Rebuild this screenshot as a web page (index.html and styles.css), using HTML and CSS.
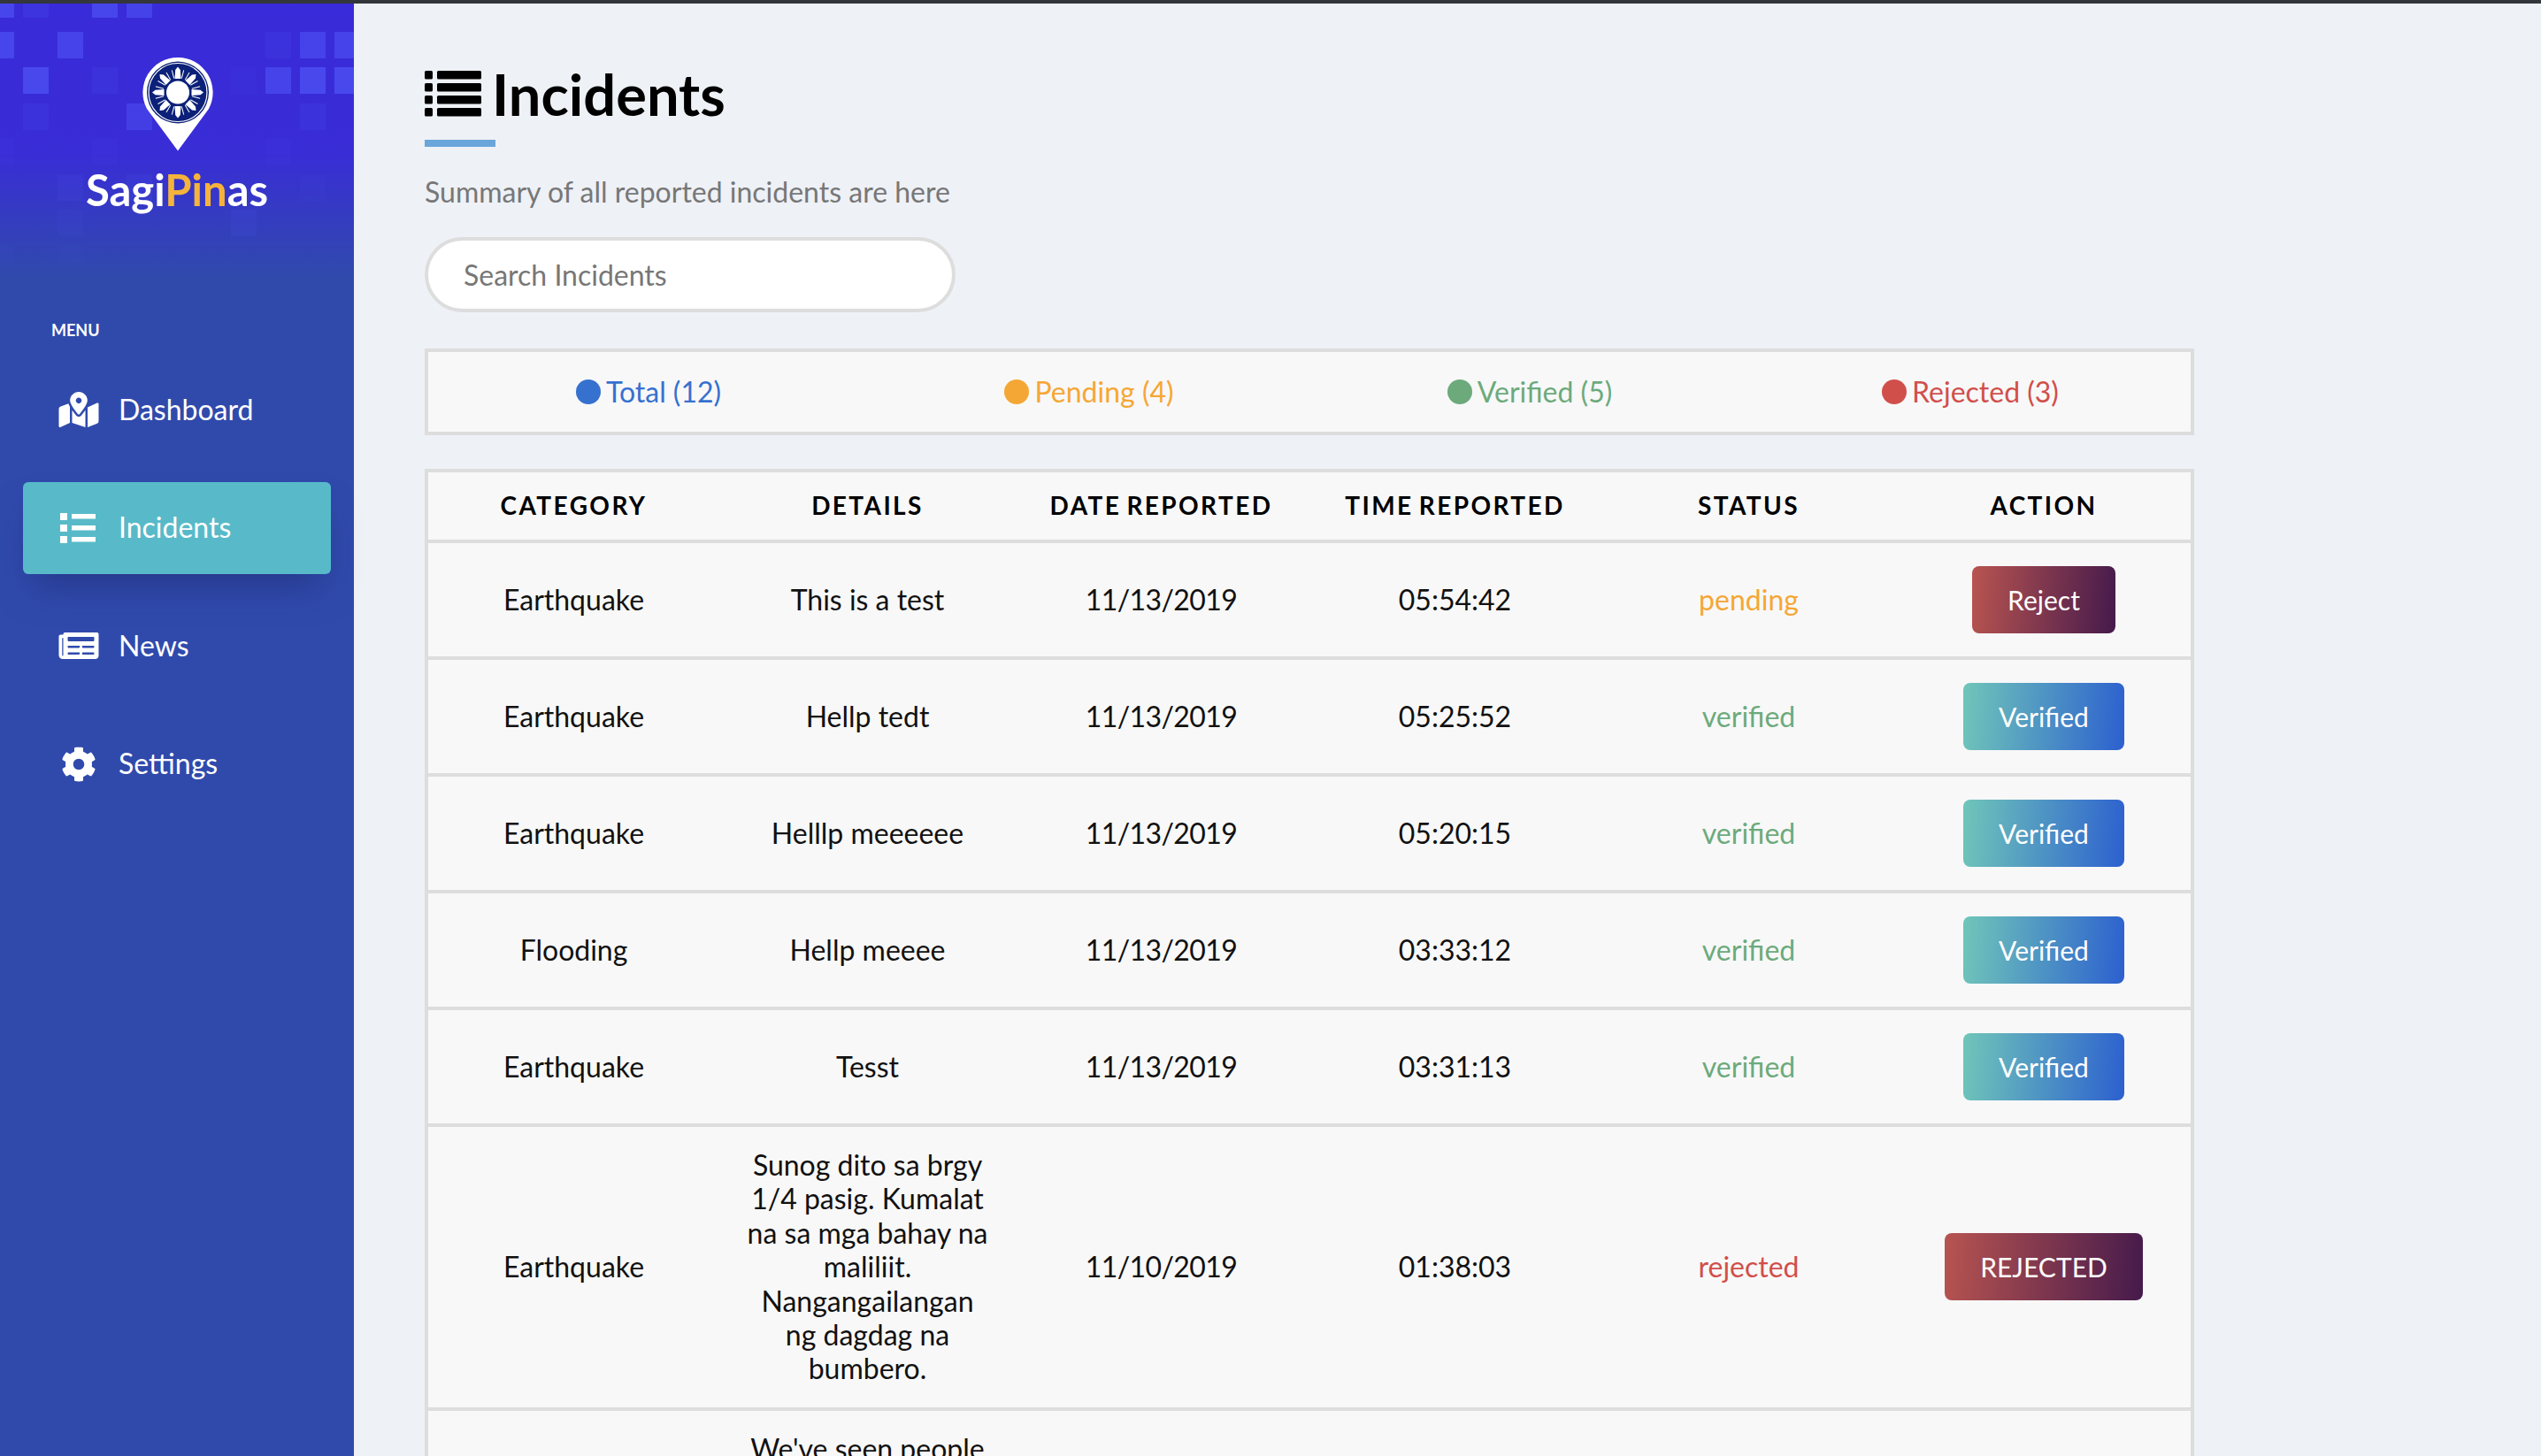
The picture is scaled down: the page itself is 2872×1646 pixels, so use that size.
FILE: index.html
```html
<!DOCTYPE html>
<html lang="en">
<head>
    <meta charset="UTF-8">
    <meta name="viewport" content="width=device-width, initial-scale=1.0">
    <title>SagiPinas - Incidents</title>
    <link rel="stylesheet" href="styles.css">
</head>
<body>
    <div class="top-bar"></div>

    <div class="app">

        <!-- Sidebar -->
        <aside class="sidebar">
            <svg class="sidebar-tiles" viewBox="0 0 400 300" aria-hidden="true">
                <rect x="-13" y="-10" width="29" height="26" opacity=".5"/>
                <rect x="26" y="-10" width="29" height="26" opacity=".18"/>
                <rect x="104" y="-10" width="29" height="26" opacity=".5"/>
                <rect x="143" y="-10" width="29" height="26" opacity=".45"/>
                <rect x="-13" y="32" width="29" height="30" opacity=".5"/>
                <rect x="65" y="32" width="29" height="30" opacity=".45"/>
                <rect x="300" y="32" width="29" height="30" opacity=".12"/>
                <rect x="339" y="32" width="29" height="30" opacity=".45"/>
                <rect x="378" y="32" width="29" height="30" opacity=".45"/>
                <rect x="26" y="72" width="29" height="30" opacity=".55"/>
                <rect x="104" y="72" width="29" height="30" opacity=".12"/>
                <rect x="261" y="72" width="29" height="30" opacity=".05"/>
                <rect x="300" y="72" width="29" height="30" opacity=".45"/>
                <rect x="339" y="72" width="29" height="30" opacity=".55"/>
                <rect x="378" y="72" width="29" height="30" opacity=".55"/>
                <rect x="26" y="113" width="29" height="30" opacity=".12"/>
                <rect x="143" y="113" width="29" height="30" opacity=".35"/>
                <rect x="339" y="113" width="29" height="30" opacity=".12"/>
                <rect x="-13" y="153" width="29" height="30" opacity=".05"/>
                <rect x="104" y="153" width="29" height="30" opacity=".05"/>
                <rect x="300" y="153" width="29" height="30" opacity=".05"/>
                <rect x="65" y="193" width="29" height="30" opacity=".1"/>
                <rect x="143" y="193" width="29" height="30" opacity=".12"/>
                <rect x="339" y="193" width="29" height="30" opacity=".05"/>
                <rect x="65" y="233" width="29" height="30" opacity=".07"/>
                <rect x="261" y="233" width="29" height="30" opacity=".1"/>
                <rect x="-13" y="273" width="29" height="20" opacity=".04"/>
                <rect x="65" y="273" width="29" height="20" opacity=".04"/>
            </svg>

            <div class="brand">
                <svg class="brand-pin" viewBox="0 0 80 106">
                    <path fill="#fff" d="M40 0A39.5 39.5 0 0 1 75 58L40 105.5 5 58A39.5 39.5 0 0 1 40 0Z"/>
                    <circle cx="40" cy="39.5" r="35" fill="#0b2078"/>
                    <circle cx="40" cy="39.5" r="33" fill="none" stroke="#fff" stroke-width="1.2"/>
                    <g fill="#fff">
                        <circle cx="40" cy="39.5" r="13"/>
                        <polygon id="ray" points="36.500,24 37.200,14 40,10.500 42.800,14 43.500,24"/>
                        <use href="#ray" transform="rotate(45 40 39.5)"/>
                        <use href="#ray" transform="rotate(90 40 39.5)"/>
                        <use href="#ray" transform="rotate(135 40 39.5)"/>
                        <use href="#ray" transform="rotate(180 40 39.5)"/>
                        <use href="#ray" transform="rotate(225 40 39.5)"/>
                        <use href="#ray" transform="rotate(270 40 39.5)"/>
                        <use href="#ray" transform="rotate(315 40 39.5)"/>
                    </g>
                    <g stroke="#fff" stroke-width="1">
                        <path id="sliver" d="M40 23V13.500" transform="rotate(15 40 39.5)"/>
                        <use href="#sliver" transform="rotate(15 40 39.5)"/>
                        <use href="#sliver" transform="rotate(45 40 39.5)"/>
                        <use href="#sliver" transform="rotate(60 40 39.5)"/>
                        <use href="#sliver" transform="rotate(90 40 39.5)"/>
                        <use href="#sliver" transform="rotate(105 40 39.5)"/>
                        <use href="#sliver" transform="rotate(135 40 39.5)"/>
                        <use href="#sliver" transform="rotate(150 40 39.5)"/>
                        <use href="#sliver" transform="rotate(180 40 39.5)"/>
                        <use href="#sliver" transform="rotate(195 40 39.5)"/>
                        <use href="#sliver" transform="rotate(225 40 39.5)"/>
                        <use href="#sliver" transform="rotate(240 40 39.5)"/>
                        <use href="#sliver" transform="rotate(270 40 39.5)"/>
                        <use href="#sliver" transform="rotate(285 40 39.5)"/>
                        <use href="#sliver" transform="rotate(315 40 39.5)"/>
                        <use href="#sliver" transform="rotate(330 40 39.5)"/>
                    </g>
                </svg>
                <div class="brand-name">Sagi<span class="brand-accent">Pin</span>as</div>
            </div>

            <div class="menu-label">MENU</div>

            <nav class="nav">
                <a class="nav-item">
                    <svg class="nav-icon" viewBox="0 0 576 512"><path d="M288 0c-69.59 0-126 56.41-126 126 0 56.26 82.35 158.8 113.9 196.02 6.39 7.54 17.82 7.54 24.2 0C331.65 284.8 414 182.26 414 126 414 56.41 357.59 0 288 0zm0 168c-23.2 0-42-18.8-42-42s18.8-42 42-42 42 18.8 42 42-18.8 42-42 42zM20.12 215.95A32.006 32.006 0 0 0 0 245.66v250.32c0 11.32 11.43 19.06 21.94 14.86L160 448V214.92c-8.84-15.98-16.07-31.54-21.25-46.42L20.12 215.95zM288 359.67c-14.07 0-27.38-6.18-36.51-16.96-19.66-23.2-40.57-49.62-59.49-76.72V448l192 64V266c-18.92 27.09-39.82 53.52-59.49 76.72-9.13 10.77-22.44 16.95-36.51 16.95zm266.06-198.51L416 224v288l139.88-55.95A31.996 31.996 0 0 0 576 426.34V176.02c0-11.32-11.43-19.06-21.94-14.86z"/></svg>
                    Dashboard
                </a>
                <a class="nav-item active">
                    <svg class="nav-icon" viewBox="0 0 46 40"><path d="M2 3h8v8H2zM2 16h8v8H2zM2 29h8v8H2zM15 4h27v5.500H15zM15 17h27v5.500H15zM15 30h27v5.500H15z"/></svg>
                    Incidents
                </a>
                <a class="nav-item">
                    <svg class="nav-icon" viewBox="0 0 576 512"><path d="M552 64H88c-13.255 0-24 10.745-24 24v8H24c-13.255 0-24 10.745-24 24v272c0 30.928 25.072 56 56 56h472c26.51 0 48-21.49 48-48V88c0-13.255-10.745-24-24-24zM56 400a8 8 0 0 1-8-8V144h16v248a8 8 0 0 1-8 8zm236-16H140c-6.627 0-12-5.373-12-12v-8c0-6.627 5.373-12 12-12h152c6.627 0 12 5.373 12 12v8c0 6.627-5.373 12-12 12zm208 0H348c-6.627 0-12-5.373-12-12v-8c0-6.627 5.373-12 12-12h152c6.627 0 12 5.373 12 12v8c0 6.627-5.373 12-12 12zm-208-96H140c-6.627 0-12-5.373-12-12v-8c0-6.627 5.373-12 12-12h152c6.627 0 12 5.373 12 12v8c0 6.627-5.373 12-12 12zm208 0H348c-6.627 0-12-5.373-12-12v-8c0-6.627 5.373-12 12-12h152c6.627 0 12 5.373 12 12v8c0 6.627-5.373 12-12 12zm0-96H140c-6.627 0-12-5.373-12-12v-40c0-6.627 5.373-12 12-12h360c6.627 0 12 5.373 12 12v40c0 6.627-5.373 12-12 12z"/></svg>
                    News
                </a>
                <a class="nav-item">
                    <svg class="nav-icon" viewBox="0 0 512 512"><path d="M487.4 315.7l-42.6-24.6c4.3-23.2 4.3-47 0-70.2l42.6-24.6c4.9-2.8 7.1-8.6 5.5-14-11.1-35.6-30-67.8-54.7-94.6-3.8-4.1-10-5.1-14.8-2.3L380.8 110c-17.9-15.4-38.5-27.3-60.8-35.1V25.8c0-5.6-3.9-10.5-9.4-11.7-36.7-8.2-74.3-7.8-109.2 0-5.5 1.2-9.4 6.1-9.4 11.7V75c-22.2 7.9-42.8 19.8-60.8 35.1L88.7 85.5c-4.9-2.8-11-1.9-14.8 2.3-24.7 26.7-43.6 58.9-54.7 94.6-1.7 5.4.6 11.2 5.5 14L67.3 221c-4.3 23.2-4.3 47 0 70.2l-42.6 24.6c-4.9 2.8-7.1 8.6-5.5 14 11.1 35.6 30 67.8 54.7 94.6 3.8 4.1 10 5.1 14.8 2.3l42.6-24.6c17.9 15.4 38.5 27.3 60.8 35.1v49.2c0 5.6 3.9 10.5 9.4 11.7 36.7 8.2 74.3 7.8 109.2 0 5.5-1.2 9.4-6.1 9.4-11.7v-49.2c22.2-7.9 42.8-19.8 60.8-35.1l42.6 24.6c4.9 2.8 11 1.9 14.8-2.3 24.7-26.7 43.6-58.9 54.7-94.6 1.5-5.5-.7-11.3-5.6-14.1zM256 336c-44.1 0-80-35.9-80-80s35.9-80 80-80 80 35.9 80 80-35.9 80-80 80z"/></svg>
                    Settings
                </a>
            </nav>
        </aside>

        <!-- Main content -->
        <main class="content">
            <h1 class="page-title">
                <svg class="title-icon" viewBox="0 0 64 52">
                    <rect width="9" height="9.500" rx="1.500"/>
                    <rect x="14" width="50" height="9.500" rx="1.500"/>
                    <rect y="14" width="9" height="9.500" rx="1.500"/>
                    <rect x="14" y="14" width="50" height="9.500" rx="1.500"/>
                    <rect y="28" width="9" height="9.500" rx="1.500"/>
                    <rect x="14" y="28" width="50" height="9.500" rx="1.500"/>
                    <rect y="42" width="9" height="9.500" rx="1.500"/>
                    <rect x="14" y="42" width="50" height="9.500" rx="1.500"/>
                </svg>
                Incidents
            </h1>
            <div class="title-rule"></div>
            <p class="subtitle">Summary of all reported incidents are here</p>

            <input class="search" type="text" placeholder="Search Incidents">

            <div class="summary">
                <div class="summary-item total"><span class="dot"></span>Total (12)</div>
                <div class="summary-item pending"><span class="dot"></span>Pending (4)</div>
                <div class="summary-item verified"><span class="dot"></span>Verified (5)</div>
                <div class="summary-item rejected"><span class="dot"></span>Rejected (3)</div>
            </div>

            <table class="incidents">
                <thead>
                    <tr>
                        <th>CATEGORY</th>
                        <th>DETAILS</th>
                        <th>DATE REPORTED</th>
                        <th>TIME REPORTED</th>
                        <th>STATUS</th>
                        <th>ACTION</th>
                    </tr>
                </thead>
                <tbody>
                    <tr>
                        <td>Earthquake</td>
                        <td>This is a test</td>
                        <td class="date">11/13/2019</td>
                        <td>05:54:42</td>
                        <td class="pending">pending</td>
                        <td><button class="btn btn-reject">Reject</button></td>
                    </tr>
                    <tr>
                        <td>Earthquake</td>
                        <td>Hellp tedt</td>
                        <td class="date">11/13/2019</td>
                        <td>05:25:52</td>
                        <td class="verified">verified</td>
                        <td><button class="btn btn-verified">Verified</button></td>
                    </tr>
                    <tr>
                        <td>Earthquake</td>
                        <td>Helllp meeeeee</td>
                        <td class="date">11/13/2019</td>
                        <td>05:20:15</td>
                        <td class="verified">verified</td>
                        <td><button class="btn btn-verified">Verified</button></td>
                    </tr>
                    <tr>
                        <td>Flooding</td>
                        <td>Hellp meeee</td>
                        <td class="date">11/13/2019</td>
                        <td>03:33:12</td>
                        <td class="verified">verified</td>
                        <td><button class="btn btn-verified">Verified</button></td>
                    </tr>
                    <tr>
                        <td>Earthquake</td>
                        <td>Tesst</td>
                        <td class="date">11/13/2019</td>
                        <td>03:31:13</td>
                        <td class="verified">verified</td>
                        <td><button class="btn btn-verified">Verified</button></td>
                    </tr>
                    <tr>
                        <td>Earthquake</td>
                        <td>Sunog dito sa brgy 1/4 pasig. Kumalat na sa mga bahay na maliliit. Nangangailangan ng dagdag na bumbero.</td>
                        <td class="date">11/10/2019</td>
                        <td>01:38:03</td>
                        <td class="rejected">rejected</td>
                        <td><button class="btn btn-reject">REJECTED</button></td>
                    </tr>
                    <!-- this row runs past the bottom of the window -->
                    <tr class="row-cut">
                        <td></td>
                        <td>We've seen people</td>
                        <td></td>
                        <td></td>
                        <td></td>
                        <td></td>
                    </tr>
                </tbody>
            </table>
        </main>
    </div>
</body>
</html>
```

FILE: styles.css
```css
* {
    box-sizing: border-box;
}

html, body {
    height: 100%;
    margin: 0;
    overflow: hidden;
}

body {
    display: flex;
    flex-direction: column;
    font-family: "Lato", "Liberation Sans", sans-serif;
    font-size: 32px;
    line-height: 1.2;
    color: #111;
    background: #eef1f6;
}

.top-bar {
    height: 4px;
    flex: none;
    background: #33363b;
}

.app {
    display: flex;
    flex: 1;
    min-height: 0;
}

/* Sidebar */
.sidebar {
    position: relative;
    width: 400px;
    flex: none;
    padding: 0 26px;
    color: #fff;
    background: linear-gradient(180deg, #392bd9 0, #392dd6 170px, #304aac 310px);
}

.sidebar-tiles {
    position: absolute;
    top: 0;
    left: 0;
    width: 400px;
    height: 300px;
    fill: #5560ff;
    filter: blur(.7px);
}

.brand {
    position: relative;
    display: flex;
    flex-direction: column;
    align-items: center;
    padding-top: 61px;
}

.brand-pin {
    width: 80px;
    height: 106px;
    display: block;
    margin-left: 2px;
}

.brand-name {
    margin-top: 13px;
    font-size: 49px;
    font-weight: 700;
    line-height: 60px;
}

.brand-accent {
    color: #f6b33b;
}

.menu-label {
    position: relative;
    margin: 118px 0 0 32px;
    font-size: 18px;
    font-weight: 700;
    line-height: 22px;
}

.nav {
    position: relative;
    display: flex;
    flex-direction: column;
    gap: 29.5px;
    margin-top: 27px;
}

.nav-item {
    display: flex;
    align-items: center;
    gap: 22px;
    height: 104px;
    padding-left: 40px;
    border-radius: 6px;
    font-size: 32px;
}

.nav-item.active {
    background: #58bac9;
    box-shadow: 0 24px 40px -12px rgba(30, 40, 110, .55);
}

.nav-icon {
    width: 46px;
    height: 40px;
    flex: none;
    fill: #fff;
}

/* Main content */
.content {
    flex: 1;
    min-width: 0;
    padding: 72px 392px 0 80px;
}

.page-title {
    display: flex;
    align-items: center;
    gap: 12px;
    margin: 0;
    font-size: 65px;
    font-weight: 700;
    line-height: 60px;
    color: #000;
}

.title-icon {
    width: 64px;
    height: 52px;
    flex: none;
}

.title-rule {
    width: 80px;
    height: 8px;
    margin-top: 22px;
    background: #6aa6da;
}

.subtitle {
    margin: 32px 0 0;
    font-size: 32px;
    line-height: 38px;
    color: #777;
}

.search {
    display: block;
    width: 600px;
    height: 85px;
    margin-top: 32px;
    padding: 0 40px;
    border: 4px solid #ddd;
    border-radius: 43px;
    outline: none;
    font-family: inherit;
    font-size: 32px;
    color: #555;
    background: #fff;
}

.search::placeholder {
    color: #777;
    opacity: 1;
}

.summary {
    display: grid;
    grid-template-columns: repeat(4, 1fr);
    align-items: center;
    height: 98px;
    margin-top: 41px;
    border: 4px solid #ddd;
    background: #f8f8f8;
}

.summary-item {
    display: flex;
    align-items: center;
    justify-content: center;
    gap: 6px;
}

.dot {
    width: 28px;
    height: 28px;
    border-radius: 50%;
    background: currentColor;
}

.total {
    color: #3671cf;
}

.pending {
    color: #f5a735;
}

.verified {
    color: #6caa7c;
}

.rejected {
    color: #d14f4b;
}

/* Table */
.incidents {
    width: 100%;
    margin-top: 38px;
    table-layout: fixed;
    border: 4px solid #ddd;
    border-spacing: 0;
    background: #f8f8f8;
}

.incidents th {
    height: 76px;
    padding: 0 3px 0 0;
    font-size: 28px;
    font-weight: 700;
    letter-spacing: 2.4px;
    word-spacing: -3px;
    color: #000;
}

.incidents td {
    height: 132px;
    padding: 24px 30px 24px 27px;
    border-top: 4px solid #ddd;
    text-align: center;
    vertical-align: middle;
}

.incidents td.date {
    letter-spacing: -.6px;
}

.incidents td:last-child,
.incidents th:last-child {
    padding-left: 0;
    padding-right: 0;
}

.row-cut td {
    height: 400px;
    vertical-align: top;
}

.btn {
    height: 76px;
    padding: 0 40px;
    border: none;
    border-radius: 8px;
    font-family: inherit;
    font-size: 30px;
    color: #fff;
    vertical-align: middle;
}

.btn-reject {
    background: linear-gradient(95deg, #b85450, #451a4c);
}

.btn-verified {
    background: linear-gradient(95deg, #70c6b9, #2c60cf);
}
```
